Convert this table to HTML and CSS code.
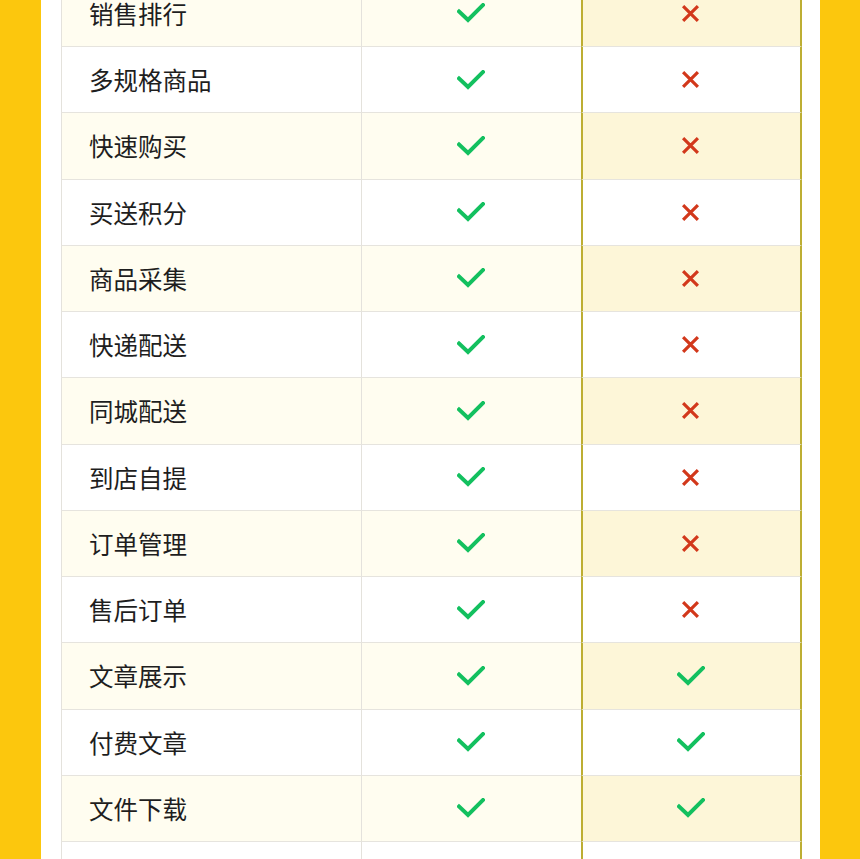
FILE: index.html
```html
<!DOCTYPE html>
<html lang="zh">
<head>
<meta charset="utf-8">
<link rel="stylesheet" href="styles.css">
</head>
<body>
<div class="page">
  <div class="panel">
    <div class="table">
      <div class="row alt"><div class="cell name">销售排行</div><div class="cell mid"><svg class="ok" viewBox="0 0 28 20"><polyline points="2,8.5 11,17 26,2"/></svg></div><div class="cell pro"><svg class="no" viewBox="0 0 18 18"><path d="M2 2L16 16M16 2L2 16"/></svg></div></div>
      <div class="row"><div class="cell name">多规格商品</div><div class="cell mid"><svg class="ok" viewBox="0 0 28 20"><polyline points="2,8.5 11,17 26,2"/></svg></div><div class="cell pro"><svg class="no" viewBox="0 0 18 18"><path d="M2 2L16 16M16 2L2 16"/></svg></div></div>
      <div class="row alt"><div class="cell name">快速购买</div><div class="cell mid"><svg class="ok" viewBox="0 0 28 20"><polyline points="2,8.5 11,17 26,2"/></svg></div><div class="cell pro"><svg class="no" viewBox="0 0 18 18"><path d="M2 2L16 16M16 2L2 16"/></svg></div></div>
      <div class="row"><div class="cell name">买送积分</div><div class="cell mid"><svg class="ok" viewBox="0 0 28 20"><polyline points="2,8.5 11,17 26,2"/></svg></div><div class="cell pro"><svg class="no" viewBox="0 0 18 18"><path d="M2 2L16 16M16 2L2 16"/></svg></div></div>
      <div class="row alt"><div class="cell name">商品采集</div><div class="cell mid"><svg class="ok" viewBox="0 0 28 20"><polyline points="2,8.5 11,17 26,2"/></svg></div><div class="cell pro"><svg class="no" viewBox="0 0 18 18"><path d="M2 2L16 16M16 2L2 16"/></svg></div></div>
      <div class="row"><div class="cell name">快递配送</div><div class="cell mid"><svg class="ok" viewBox="0 0 28 20"><polyline points="2,8.5 11,17 26,2"/></svg></div><div class="cell pro"><svg class="no" viewBox="0 0 18 18"><path d="M2 2L16 16M16 2L2 16"/></svg></div></div>
      <div class="row alt"><div class="cell name">同城配送</div><div class="cell mid"><svg class="ok" viewBox="0 0 28 20"><polyline points="2,8.5 11,17 26,2"/></svg></div><div class="cell pro"><svg class="no" viewBox="0 0 18 18"><path d="M2 2L16 16M16 2L2 16"/></svg></div></div>
      <div class="row"><div class="cell name">到店自提</div><div class="cell mid"><svg class="ok" viewBox="0 0 28 20"><polyline points="2,8.5 11,17 26,2"/></svg></div><div class="cell pro"><svg class="no" viewBox="0 0 18 18"><path d="M2 2L16 16M16 2L2 16"/></svg></div></div>
      <div class="row alt"><div class="cell name">订单管理</div><div class="cell mid"><svg class="ok" viewBox="0 0 28 20"><polyline points="2,8.5 11,17 26,2"/></svg></div><div class="cell pro"><svg class="no" viewBox="0 0 18 18"><path d="M2 2L16 16M16 2L2 16"/></svg></div></div>
      <div class="row"><div class="cell name">售后订单</div><div class="cell mid"><svg class="ok" viewBox="0 0 28 20"><polyline points="2,8.5 11,17 26,2"/></svg></div><div class="cell pro"><svg class="no" viewBox="0 0 18 18"><path d="M2 2L16 16M16 2L2 16"/></svg></div></div>
      <div class="row alt"><div class="cell name">文章展示</div><div class="cell mid"><svg class="ok" viewBox="0 0 28 20"><polyline points="2,8.5 11,17 26,2"/></svg></div><div class="cell pro"><svg class="ok" viewBox="0 0 28 20"><polyline points="2,8.5 11,17 26,2"/></svg></div></div>
      <div class="row"><div class="cell name">付费文章</div><div class="cell mid"><svg class="ok" viewBox="0 0 28 20"><polyline points="2,8.5 11,17 26,2"/></svg></div><div class="cell pro"><svg class="ok" viewBox="0 0 28 20"><polyline points="2,8.5 11,17 26,2"/></svg></div></div>
      <div class="row alt"><div class="cell name">文件下载</div><div class="cell mid"><svg class="ok" viewBox="0 0 28 20"><polyline points="2,8.5 11,17 26,2"/></svg></div><div class="cell pro"><svg class="ok" viewBox="0 0 28 20"><polyline points="2,8.5 11,17 26,2"/></svg></div></div>
      <div class="row"><div class="cell name"></div><div class="cell mid"></div><div class="cell pro"></div></div>
    </div>
  </div>
</div>
</body>
</html>
```
FILE: styles.css
```css
html, body {
  margin: 0;
  padding: 0;
  background: #fcc70d;
  overflow: hidden;
  height: 859px;
}
.page {
  padding-left: 41px;
  width: 779px;
}
.panel {
  background: #ffffff;
  width: 779px;
  height: 900px;
  padding-left: 20px;
  box-sizing: border-box;
}
.table {
  width: 741px;
  margin-top: -19.25px;
  font-family: "Noto Sans CJK SC", "Noto Sans", sans-serif;
}
.row {
  display: grid;
  grid-template-columns: 300px 220px 221px;
  height: 66.25px;
  box-sizing: border-box;
}
.cell {
  display: flex;
  align-items: center;
  box-sizing: border-box;
  border-bottom: 1px solid #e6e4de;
  background: #ffffff;
}
.name {
  border-left: 1px solid #e4e2dc;
  padding-left: 27px;
  font-size: 24.5px;
  color: #1e1e1e;
}
.mid {
  justify-content: center;
  border-left: 1px solid #e4e2dc;
  padding-right: 1px;
}
.pro {
  justify-content: center;
  border-left: 2px solid #bdae33;
  border-right: 2px solid #bdae33;
  padding-right: 2px;
}
.row.alt .name,
.row.alt .mid {
  background: #fffdf0;
}
.row.alt .pro {
  background: #fdf6d8;
}
.ok {
  width: 28px;
  height: 20px;
  fill: none;
  stroke: #13c05f;
  stroke-width: 4;
  stroke-linecap: square;
  stroke-linejoin: miter;
}
.no {
  width: 19px;
  height: 19px;
  fill: none;
  stroke: #d2381b;
  stroke-width: 3;
}
```
